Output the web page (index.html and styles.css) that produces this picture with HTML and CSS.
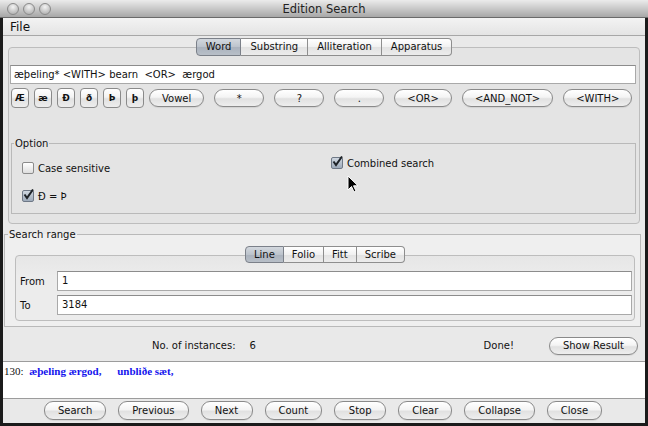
FILE: index.html
```html
<!DOCTYPE html>
<html lang="en">
<head>
  <meta charset="UTF-8">
  <title>Edition Search</title>
  <link rel="stylesheet" href="styles.css">
</head>
<body>
  <div class="window">
    <div class="titlebar">
      <div class="lights">
        <span class="light"></span>
        <span class="light"></span>
        <span class="light"></span>
      </div>
      <div class="title">Edition Search</div>
    </div>
    <div class="frame">
      <div class="menubar"><span class="menu">File</span></div>

      <div class="tabbed main-tabs">
        <div class="tabs">
          <span class="tab selected">Word</span>
          <span class="tab">Substring</span>
          <span class="tab">Alliteration</span>
          <span class="tab">Apparatus</span>
        </div>
        <div class="pane">
          <div class="query">æþeling* &lt;WITH&gt; bearn&nbsp; &lt;OR&gt;&nbsp; ærgod</div>
          <div class="keys">
            <button class="key">Æ</button>
            <button class="key">æ</button>
            <button class="key">Ð</button>
            <button class="key">ð</button>
            <button class="key">Þ</button>
            <button class="key">þ</button>
            <button class="pill vowel">Vowel</button>
            <button class="pill op">*</button>
            <button class="pill op">?</button>
            <button class="pill op">.</button>
            <button class="pill op">&lt;OR&gt;</button>
            <button class="pill op">&lt;AND_NOT&gt;</button>
            <button class="pill op">&lt;WITH&gt;</button>
          </div>
          <fieldset class="group options">
            <legend>Option</legend>
            <div class="option-grid">
              <div class="option-col left">
                <label class="check"><span class="box"></span>Case sensitive</label>
                <label class="check">
                  <span class="box on"><svg viewBox="0 0 12 12" width="12" height="12"><path d="M2.5 5.5 L5 9 L11 0.5" fill="none" stroke="#1e2328" stroke-width="2"/></svg></span>Ð = Þ
                </label>
              </div>
              <div class="option-col right">
                <label class="check">
                  <span class="box on"><svg viewBox="0 0 12 12" width="12" height="12"><path d="M2.5 5.5 L5 9 L11 0.5" fill="none" stroke="#1e2328" stroke-width="2"/></svg></span>Combined search
                </label>
              </div>
            </div>
          </fieldset>
        </div>
      </div>

      <fieldset class="group range">
        <legend>Search range</legend>
        <div class="tabbed sub-tabs">
          <div class="tabs">
            <span class="tab selected">Line</span>
            <span class="tab">Folio</span>
            <span class="tab">Fitt</span>
            <span class="tab">Scribe</span>
          </div>
          <div class="pane">
            <div class="field-row">
              <span class="field-label">From</span>
              <div class="field">1</div>
            </div>
            <div class="field-row">
              <span class="field-label">To</span>
              <div class="field">3184</div>
            </div>
          </div>
        </div>
      </fieldset>

      <div class="status">
        <span class="count-label">No. of instances:</span>
        <span class="count-value">6</span>
        <span class="done">Done!</span>
        <button class="pill show">Show Result</button>
      </div>

      <div class="results">
        <span class="line-no">130:</span>
        <span class="hit first">æþeling ærgod,</span>
        <span class="hit">unbliðe sæt,</span>
      </div>

      <div class="actions">
        <button class="pill">Search</button>
        <button class="pill">Previous</button>
        <button class="pill">Next</button>
        <button class="pill">Count</button>
        <button class="pill">Stop</button>
        <button class="pill">Clear</button>
        <button class="pill">Collapse</button>
        <button class="pill">Close</button>
      </div>
    </div>

    <svg class="cursor" width="12" height="19" viewBox="0 0 12 19">
      <path d="M1 1 L1 15 L4.5 11.5 L7 17 L9 16 L6.5 10.8 L11 10.8 Z" fill="#000" stroke="#fff" stroke-width="1"/>
    </svg>
  </div>
</body>
</html>
```

FILE: styles.css
```css
* {
  box-sizing: border-box;
}
body {
  margin: 0;
  font-family: "DejaVu Sans", sans-serif;
  font-size: 10px;
  color: #111;
  background: #1b1b1b;
}
.window {
  position: relative;
  width: 648px;
  height: 426px;
  background: #1b1b1b;
  overflow: hidden;
}
.titlebar {
  display: flex;
  align-items: center;
  height: 18px;
  background: linear-gradient(#ebebeb, #c9c9c9 50%, #a7a7a7);
  border-bottom: 1px solid #6a6a6a;
}
.lights {
  display: flex;
  gap: 4px;
  padding-left: 7px;
  width: 90px;
}
.light {
  width: 12px;
  height: 12px;
  border-radius: 50%;
  border: 1px solid #8a8a8a;
  background: radial-gradient(circle at 50% 30%, #f4f4f4, #c4c4c4 60%, #a9a9a9);
}
.title {
  flex: 1;
  text-align: center;
  margin-right: 90px;
  font-size: 11.5px;
  color: #222;
}
.frame {
  margin: 0 3px;
  height: 405px;
  background: #e9e9e9;
}
.menubar {
  height: 18px;
  padding-left: 7px;
  line-height: 18px;
  font-size: 12px;
  background: linear-gradient(#f3f3f3, #e4e4e4);
  border-bottom: 1px solid #a7a7a7;
}

/* tabbed panes */
.tabbed .tabs {
  position: relative;
  z-index: 1;
  display: flex;
  justify-content: center;
}
.tab {
  height: 18px;
  line-height: 16px;
  padding: 0 9px;
  border: 1px solid #8e8e8e;
  border-left: none;
  background: linear-gradient(#ffffff, #f1f1f1 50%, #e2e2e2 52%, #ececec);
}
.tab:first-child {
  border-left: 1px solid #8e8e8e;
  border-radius: 4px 0 0 4px;
}
.tab:last-child {
  border-radius: 0 4px 4px 0;
}
.tab.selected {
  background: linear-gradient(#d3d8de, #bcc3cc 50%, #aab2bd 52%, #b8bfc8);
  border-color: #7b8089;
}
.pane {
  border: 1px solid #bdbdbd;
  border-radius: 4px;
  background: #e4e4e4;
}
.main-tabs {
  margin: 2px 5px 0 5px;
}
.main-tabs .tabs {
  margin-bottom: -9px;
}
.main-tabs .pane {
  padding: 17px 3px 9px 1px;
}
.query {
  height: 19px;
  line-height: 18px;
  padding-left: 3px;
  background: #fff;
  border: 1px solid #a9a9a9;
  border-top-color: #8c8c8c;
  font-size: 10px;
}
.keys {
  display: flex;
  align-items: center;
  gap: 5px;
  height: 20px;
  margin-top: 4px;
  padding-left: 1px;
}
button {
  font-family: "DejaVu Sans", sans-serif;
  font-size: 10px;
  color: #111;
  margin: 0;
}
.key {
  height: 20px;
  min-width: 18px;
  padding: 0 3px;
  border: 1px solid #8a8a8a;
  border-radius: 4px;
  font-weight: bold;
  font-size: 9px;
  background: linear-gradient(#ffffff, #f3f3f3 45%, #e1e1e1 55%, #ededed);
}
.pill {
  height: 18px;
  padding: 0 12px;
  border: 1px solid #8a8a8a;
  border-radius: 9px;
  background: linear-gradient(#ffffff, #f4f4f4 45%, #e1e1e1 55%, #eeeeee);
  box-shadow: 0 1px 1px rgba(0, 0, 0, 0.08);
}
.pill.op {
  min-width: 50px;
  margin-left: 5px;
}

/* titled groups */
.group {
  margin: 0;
  padding: 0 0 0 2px;
  border: 1px solid #b9b9b9;
}
.group legend {
  padding: 0 1px;
  line-height: 13px;
}
.options {
  margin-top: 29px;
  padding-bottom: 10px;
  margin-left: 1px;
}
.option-grid {
  display: grid;
  grid-template-columns: 317px 1fr;
}
.option-col {
  display: flex;
  flex-direction: column;
  gap: 14px;
}
.option-col.left {
  padding-left: 8px;
  padding-top: 11px;
}
.option-col.right {
  padding-top: 6px;
}
.check {
  display: flex;
  align-items: center;
  gap: 4px;
  height: 14px;
}
.box {
  width: 12px;
  height: 12px;
  border: 1px solid #8b8b8b;
  border-radius: 2px;
  background: linear-gradient(#ffffff, #dedede);
  position: relative;
}
.box.on {
  background: linear-gradient(#cfd7e0, #9eabbb);
  border-color: #6e7886;
}
.box svg {
  position: absolute;
  left: -1px;
  top: -2px;
}

/* search range */
.range {
  margin: 4px 4px 0 1px;
  padding: 0 0 5px 3px;
  background: #efefef;
}
.sub-tabs {
  margin: 5px 5px 0 7px;
}
.sub-tabs .tabs {
  margin-bottom: -8px;
}
.sub-tabs .tab {
  height: 17px;
  line-height: 15px;
  padding: 0 8px;
}
.sub-tabs .pane {
  padding: 15px 2px 5px 4px;
  background: linear-gradient(#e6e6e6, #ececec 20px);
}
.field-row {
  display: flex;
  align-items: center;
}
.field-row + .field-row {
  margin-top: 4px;
}
.field-label {
  width: 37px;
}
.field {
  flex: 1;
  height: 20px;
  line-height: 18px;
  padding-left: 4px;
  background: #fff;
  border: 1px solid #a9a9a9;
  border-top-color: #8c8c8c;
}

/* status and results */
.status {
  display: flex;
  align-items: center;
  height: 19px;
  margin-top: 9px;
}
.count-label {
  margin-left: 149px;
}
.count-value {
  margin-left: 14px;
}
.done {
  margin-left: auto;
  margin-right: 35px;
}
.pill.show {
  margin-right: 7px;
  padding: 0 13px;
}
.results {
  height: 38px;
  margin-top: 6px;
  padding: 3px 0 0 1px;
  background: #fff;
  border-top: 1px solid #9c9c9c;
  border-bottom: 1px solid #9c9c9c;
  font-family: "Liberation Serif", serif;
  font-size: 11px;
  line-height: 13px;
}
.hit {
  font-weight: bold;
  color: #1414ee;
}
.hit.first {
  margin-left: 3px;
}
.hit + .hit {
  margin-left: 13px;
}
.actions {
  display: flex;
  justify-content: center;
  gap: 12px;
  margin-top: 2px;
  padding-right: 2px;
}
.actions .pill {
  height: 19px;
  min-width: 52px;
  padding: 0 13px;
}
.cursor {
  position: absolute;
  left: 347px;
  top: 175px;
}
```
